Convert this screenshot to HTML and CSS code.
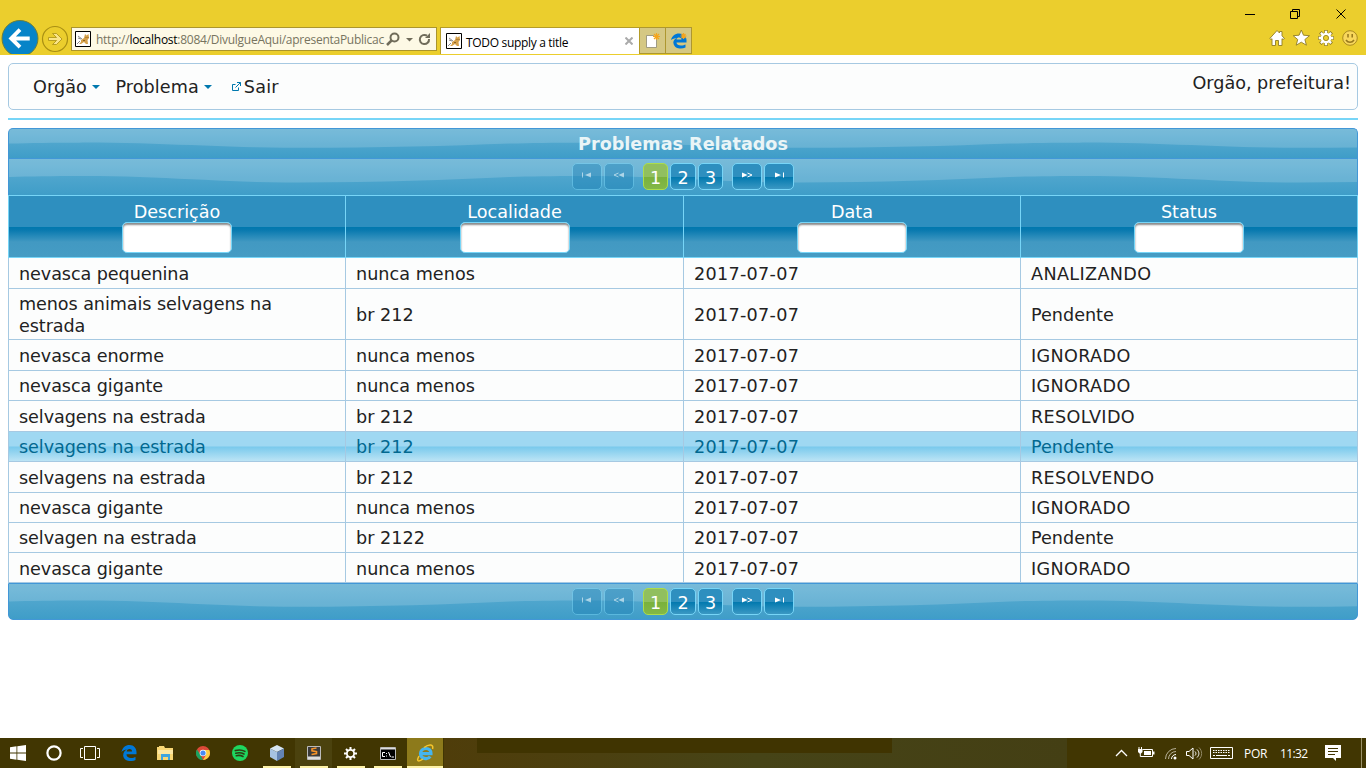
FILE: index.html
```html
<!DOCTYPE html>
<html lang="pt">
<head>
<meta charset="utf-8">
<title>TODO supply a title</title>
<link rel="stylesheet" href="styles.css">
</head>
<body>
<svg class="defs" width="0" height="0">
  <defs>
    <symbol id="cat" viewBox="0 0 16 16"><path fill="#fff" stroke="#000" d="M.5.500h15v15H.5z"/><path fill="#d5a04a" d="M6 9l3-2 1-4 1.500 1.500L13.500 3l.5 4-1.500 2 .5 4h-2l-2-2-3 2H4l2-2z"/><path fill="none" stroke="#8b8b8b" d="M7 8L3 5M6 8L3 7M5 10l-3 3"/><path fill="#8c6427" d="M10.500 6h1v1h-1zM12.500 6h1v1h-1zM8 9h2v1H8z"/></symbol>
    <symbol id="p-first" viewBox="0 0 10 6"><path d="M0 .5h1v5H0zM9 .5v5L3 3z"/></symbol>
    <symbol id="p-prev" viewBox="0 0 12 6"><path d="M11 .5v5L5.500 3z"/><path fill="none" stroke="#fff" d="M5.500 1L1 3l4.500 2"/></symbol>
    <symbol id="p-next" viewBox="0 0 12 6"><path d="M1 .5v5L6.500 3z"/><path fill="none" stroke="#fff" d="M6.500 1L11 3 6.500 5"/></symbol>
    <symbol id="p-last" viewBox="0 0 10 6"><path d="M9 .5h1v5H9zM1 .5v5L7 3z"/></symbol>
  </defs>
</svg>

<header class="browser">
  <div class="window-buttons">
    <svg width="106" height="14" viewBox="0 0 106 14" fill="none" stroke="#000"><path d="M0 7.500h10M45.500 4.500h7v7h-7zM47.500 4V2.500h7v7H53M91.500 2.500l9 9M100.500 2.500l-9 9"/></svg>
  </div>
  <div class="toolbar">
    <svg class="back" width="40" height="35" viewBox="0 0 40 35"><circle cx="20" cy="19" r="18.500" fill="#0784c8" stroke="#6b7d3a" stroke-width="1"/><path fill="none" stroke="#fff" stroke-width="4" d="M30 19H12M20 10l-9 9 9 9"/></svg>
    <svg class="forward" width="28" height="28" viewBox="0 0 28 28"><circle cx="14" cy="14" r="12.500" fill="none" stroke="#a88f13" stroke-width="1.200"/><path fill="#fae588" stroke="#a88f13" stroke-width=".8" d="M7.500 12.500h8L11.500 8.500h4l5.500 5.500-5.500 5.500h-4l4-4h-8z"/></svg>
    <div class="address">
      <svg width="16" height="16"><use href="#cat"/></svg>
      <span class="url">http://<b>localhost</b>:8084/DivulgueAqui/apresentaPublicac</span>
      <svg class="address-tools" width="48" height="18" viewBox="0 0 48 18" fill="none" stroke="#706c5a"><circle cx="8.500" cy="7.500" r="4" stroke-width="2"/><path stroke-width="2.500" d="M5.500 10.500L1 15"/><path fill="#706c5a" stroke="none" d="M20 8h7l-3.500 3.500z"/><path stroke-width="2" d="M43 9a4.600 4.600 0 1 1-2-3.300"/><path fill="#706c5a" stroke="none" d="M39 8h5V3z"/></svg>
    </div>
    <div class="tab">
      <svg width="16" height="16"><use href="#cat"/></svg>
      <span class="tab-title">TODO supply a title</span>
      <svg width="8" height="8" viewBox="0 0 8 8"><path stroke="#aaa" stroke-width="2" d="M.5.5l7 7M7.500.5l-7 7"/></svg>
    </div>
    <div class="tab-button"><svg width="16" height="18" viewBox="0 0 16 18"><path fill="#fff" stroke="#8d8974" stroke-width=".8" d="M1.500 3.500h7l3 3v9h-10z"/><path stroke="#f5a51c" stroke-width="1.200" d="M11.500 1v7M8 4.500h7M9 2l5 5M14 2L9 7"/></svg></div>
    <div class="tab-button"><svg width="16" height="18" viewBox="0 0 16 18"><path fill="#0078d7" d="M0 8C1 4 4 1.500 8 1.500c5 0 7.500 3.500 7.500 6.500v2.500h-10c0 2 2 3 4.500 3 2 0 3.500-.5 4.500-1v3c-4 2-11 1.500-12-4C1.800 9 4 6.500 6 6 3.500 6 1.500 7 0 8zm5.500-.5h5C10.500 5 6 4.800 5.500 7.500z"/><path stroke="#f5a51c" stroke-width="1.200" d="M12.500 1v6M9.500 4h6M10.500 2l4 4M14.500 2l-4 4"/></svg></div>
    <svg class="browser-icons" width="92" height="18" viewBox="0 0 92 18">
      <g fill="#fff" stroke="#907d25" stroke-width=".9"><path d="M.8 9.500L8 1.500l2.500 2.500V2.500h2.500v4.300l2.500 2.700-1.500 1-1-.8v6.800H9.500v-5h-3v5H3V9.700l-1 .8z"/><path d="M32.300 1l2.200 5.200 6 .5-4.600 3.800 1.500 5.700-5.100-3-5.100 3 1.500-5.700-4.500-3.800 5.900-.5z"/></g>
      <path stroke="#907d25" stroke-width="3.600" d="M57 1v16M49 9h16M51.300 3.300l11.400 11.400M62.700 3.300L51.300 14.700"/><path stroke="#fff" stroke-width="2.300" d="M57 1.700v14.600M49.700 9h14.600M51.900 3.900l10.200 10.200M62.100 3.900L51.900 14.100"/><circle cx="57" cy="9" r="4" fill="#ebce2d" stroke="#fff" stroke-width="2.600"/><circle cx="57" cy="9" r="2.600" fill="#ebce2d" stroke="#907d25" stroke-width=".8"/>
      <circle cx="81" cy="9" r="7.300" fill="#f8d75c" stroke="#aa8b20"/><path fill="none" stroke="#97781a" stroke-width="1.500" d="M79 5v3.500M83.200 5v3.500M77 11c2 3 6 3 8 0"/>
    </svg>
  </div>
</header>

<main class="page">
  <nav class="menubar">
    <a class="menu-item">Orgão<i class="caret"></i></a>
    <a class="menu-item second">Problema<i class="caret"></i></a>
    <a class="menu-item exit"><svg width="9" height="9" viewBox="0 0 9 9" fill="none" stroke="#0078ae"><path d="M3.500 2.500h-3v6h6v-3M5 .5h3.500V4M8.500.5l-5 5"/></svg>Sair</a>
    <span class="greeting">Orgão, prefeitura!</span>
  </nav>
  <div class="rule"></div>

  <section class="datatable">
    <div class="caption wave">Problemas Relatados</div>
    <div class="paginator wave">
      <span class="pg icon off"><svg width="10" height="6"><use href="#p-first"/></svg></span>
      <span class="pg icon off"><svg width="12" height="6"><use href="#p-prev"/></svg></span>
      <span class="pg num active">1</span><span class="pg num">2</span><span class="pg num three">3</span>
      <span class="pg icon next"><svg width="12" height="6"><use href="#p-next"/></svg></span>
      <span class="pg icon"><svg width="10" height="6"><use href="#p-last"/></svg></span>
    </div>
    <table class="grid">
      <colgroup><col class="c1"><col class="c2"><col class="c3"><col class="c4"></colgroup>
      <thead><tr>
        <th>Descrição<input type="text"></th><th>Localidade<input type="text"></th><th>Data<input type="text"></th><th>Status<input type="text"></th>
      </tr></thead>
      <tbody>
        <tr class="h31"><td>nevasca pequenina</td><td>nunca menos</td><td>2017-07-07</td><td>ANALIZANDO</td></tr>
        <tr class="h51"><td>menos animais selvagens na<br>estrada</td><td>br 212</td><td>2017-07-07</td><td class="mixed">Pendente</td></tr>
        <tr class="h31"><td>nevasca enorme</td><td>nunca menos</td><td>2017-07-07</td><td>IGNORADO</td></tr>
        <tr class="h30"><td>nevasca gigante</td><td>nunca menos</td><td>2017-07-07</td><td>IGNORADO</td></tr>
        <tr class="h31"><td>selvagens na estrada</td><td>br 212</td><td>2017-07-07</td><td>RESOLVIDO</td></tr>
        <tr class="h30 hover"><td>selvagens na estrada</td><td>br 212</td><td>2017-07-07</td><td class="mixed">Pendente</td></tr>
        <tr class="h31"><td>selvagens na estrada</td><td>br 212</td><td>2017-07-07</td><td>RESOLVENDO</td></tr>
        <tr class="h30"><td>nevasca gigante</td><td>nunca menos</td><td>2017-07-07</td><td>IGNORADO</td></tr>
        <tr class="h30"><td>selvagen na estrada</td><td>br 2122</td><td>2017-07-07</td><td class="mixed">Pendente</td></tr>
        <tr class="h30 end"><td>nevasca gigante</td><td>nunca menos</td><td>2017-07-07</td><td>IGNORADO</td></tr>
      </tbody>
    </table>
    <div class="paginator bottom wave">
      <span class="pg icon off"><svg width="10" height="6"><use href="#p-first"/></svg></span>
      <span class="pg icon off"><svg width="12" height="6"><use href="#p-prev"/></svg></span>
      <span class="pg num active">1</span><span class="pg num">2</span><span class="pg num three">3</span>
      <span class="pg icon next"><svg width="12" height="6"><use href="#p-next"/></svg></span>
      <span class="pg icon"><svg width="10" height="6"><use href="#p-last"/></svg></span>
    </div>
  </section>
</main>

<footer class="taskbar">
  <span class="task sys"><svg width="16" height="16" viewBox="0 0 16 16" fill="#fff"><path d="M0 2.200l6.500-.9v6.200H0zM7.300 1.200L16 0v7.500H7.300zM0 8.500h6.500v6.200L0 13.800zM7.300 8.500H16V16l-8.700-1.200z"/></svg></span>
  <span class="task sys"><svg width="16" height="16" viewBox="0 0 16 16"><circle cx="8" cy="8" r="6.600" fill="none" stroke="#fff" stroke-width="2.200"/></svg></span>
  <span class="task sys last"><svg width="20" height="14" viewBox="0 0 20 14" fill="none" stroke="#fff"><path d="M4.500.5h11v13h-11zM3 2.500H.5v9H3M17 2.500h2.500v9H17"/></svg></span>
  <span class="task"><svg width="16" height="16" viewBox="0 0 16 16"><path fill="#0078d7" d="M.5 7C1.500 2.500 4.500 0 8.500 0c4.500 0 7 3.500 7 7v2.200h-10c0 2.500 2 3.800 4.500 3.800 2 0 3.500-.5 4.500-1v3C10 17 3 16.500 2.200 11 2 7.500 4 5.300 6 4.500 4 4.500 1.500 5.500.5 7zm5.200-.5h5.300C11 3.300 6.200 3.300 5.700 6.500z"/></svg></span>
  <span class="task"><svg width="17" height="15" viewBox="0 0 17 15"><path fill="#f8d775" d="M0 1h2V0h5l1 2h8v12H0z"/><path fill="#fbe7a3" d="M1 4h15v4H1z"/><path fill="#3da4df" d="M4 8h9v6h-2v-3H6v3H4z"/></svg></span>
  <span class="task"><svg width="14" height="14" viewBox="0 0 14 14"><circle cx="7" cy="7" r="7" fill="#dc4938"/><path fill="#1aa260" d="M1 3.400L4.800 9.500 7 14A7 7 0 0 1 1 3.400z"/><path fill="#ffce44" d="M7 4h6.300A7 7 0 0 1 7 14l3-5z"/><circle cx="7" cy="7" r="3.300" fill="#fff"/><circle cx="7" cy="7" r="2.600" fill="#4a8af4"/></svg></span>
  <span class="task"><svg width="16" height="16" viewBox="0 0 16 16"><circle cx="8" cy="8" r="8" fill="#1ed760"/><path fill="none" stroke="#2d3d12" stroke-width="1.600" stroke-linecap="round" d="M3.300 5.600c3.500-1 7-.7 9.600.8M3.800 8.200c3-.8 5.800-.5 8.200.8M4.300 10.700c2.500-.6 4.700-.4 6.700.8"/></svg></span>
  <span class="task open"><svg width="14" height="16" viewBox="0 0 14 16"><path fill="#d5e4f2" d="M0 3.500L7 0l7 3.500L7 7z"/><path fill="#a7c3e2" d="M0 3.500L7 7v9L0 12z"/><path fill="#6484b4" d="M14 3.500L7 7v9l7-4z"/></svg></span>
  <span class="task open tint"><svg width="14" height="14" viewBox="0 0 14 14"><path fill="#3b3b3b" stroke="#bbb" d="M.5.500h13v13H.5z"/><path fill="#ddd" d="M1 10.500h12V13H1z"/><path fill="none" stroke="#f79429" stroke-width="1.600" d="M9.500 2L5 2.800v2l4.500.8v2L4.500 8.500"/></svg></span>
  <span class="task open"><svg width="13" height="13" viewBox="0 0 13 13" fill="none" stroke="#fff"><circle cx="6.500" cy="6.500" r="3.600" stroke-width="1.800"/><path stroke-width="2" d="M6.500 0v3M6.500 10v3M0 6.500h3M10 6.500h3M2 2l2 2M9 9l2 2M11 2L9 4M4 9l-2 2"/></svg></span>
  <span class="task open"><svg width="16" height="13" viewBox="0 0 16 13"><path fill="#000" stroke="#bbb" d="M.5.5h15v12H.5z"/><path fill="#ddd" d="M1 1h14v1.500H1z"/><path fill="none" stroke="#fff" d="M5 5.500H2.500v4H5M6.500 6v1M6.500 8.500v1M8.500 5l2 5M11.500 10H14"/></svg></span>
  <span class="task open current"><svg width="18" height="18" viewBox="0 0 18 18"><path fill="none" stroke="#45b5ee" stroke-width="3.200" d="M4.500 9.700H15C15.200 6.500 13 4.500 10 4.500c-3.500 0-5.500 2.500-5.500 5.200 0 5.300 7.500 6.300 9.700 2.800"/><path fill="none" stroke="#f5c52c" stroke-width="1.500" d="M3 12C-.5 18.500 3.500 17.500 7 15M8 3.500C13 0 18 0 16.500 5"/></svg></span>
  <span class="strip"><i class="strip-dark"></i></span>
  <span class="tray">
    <svg class="tray-icons" width="119" height="18" viewBox="0 0 119 18" fill="none" stroke="#fff">
      <path stroke-width="1.300" d="M1 12l5.500-5.500L12 12"/>
      <path d="M27.500 5.500h10v7h-10"/><path fill="#fff" stroke="none" d="M29 7h7v4h-7zM38 7.500h1.500v3H38zM23 5h4.500v3L26 9.500h-1.500L23 8zM23.500 3h1v2h-1zM26 3h1v2h-1z"/><path d="M25.300 9v3.500H28"/>
      <path stroke="#b8b198" d="M50.500 15A10.500 10.500 0 0 1 61 4.500M53.500 15A7.500 7.500 0 0 1 61 7.500"/><path d="M56.500 15a4.500 4.500 0 0 1 4.500-4.500"/><circle cx="60" cy="14" r="1.500" fill="#fff" stroke="none"/>
      <path d="M71.500 7.500H74l4-3.500v11l-4-3.500h-2.500zM80 7.500c1.200 1.200 1.200 3 0 4M82 5.500c2.500 2.500 2.500 5.500 0 8"/><path stroke="#908764" d="M84 3.500c3.500 3.500 3.500 8.500 0 12"/>
      <path d="M95.500 3.500h22v11h-22z"/><path stroke-dasharray="1.500 1" d="M98 6.500h17M98 8.500h17"/><path d="M98 11.500h2M101 11.500h11M113 11.500h2"/>
    </svg>
    <span class="lang">POR</span><span class="clock">11:32</span>
    <svg class="note" width="16" height="16" viewBox="0 0 16 16"><path fill="#fff" d="M0 0h16v13h-5v3l-3-3H0z"/><path stroke="#403400" d="M3 3.500h10M3 6.500h10M3 9.500h7"/></svg>
    <i class="show-desktop"></i>
  </span>
</footer>
</body>
</html>
```

FILE: styles.css
```css
* { box-sizing: border-box; }
body { margin: 0; width: 1366px; height: 768px; overflow: hidden; display: flex; flex-direction: column; background: #fff; font-family: Verdana, "DejaVu Sans", sans-serif; font-size: 17.6px; color: #222; }
.defs { position: absolute; }
svg { display: block; flex: none; }

/* Browser window frame */
.browser { height: 55px; flex: none; background: #ebce2d; font: 12px "Open Sans", "Noto Sans", sans-serif; }
.window-buttons { height: 20px; padding: 7px 20px 0 0; display: flex; justify-content: flex-end; }
.window-buttons svg { margin-right: -5px; }
.toolbar { height: 35px; display: flex; align-items: flex-start; }
.back { height: 34px; }
.forward { margin: 5px 0 0 1px; }
.address { margin: 7px 0 0 2px; width: 366px; height: 24px; border: 1px solid #ab952d; background: #fdf9e5; display: flex; align-items: center; padding-left: 3px; }
.url { width: 286px; margin-left: 5px; white-space: nowrap; color: #77745f; letter-spacing: -.26px; line-height: 18px; padding-top: 2px; }
.url b { font-weight: 400; color: #000; }
.address-tools { margin-left: 4px; }
.tab { margin: 7px 0 0 3px; width: 200px; height: 27px; border: 1px solid #b49c28; border-bottom: 0; background: #fff; display: flex; align-items: center; padding: 0 6px 0 5px; color: #000; }
.tab-title { flex: 1; margin-left: 4px; white-space: nowrap; letter-spacing: -.32px; padding-top: 2px; }
.tab-button { margin-top: 7px; width: 26px; height: 27px; border: 1px solid #ad9730; border-left: 0; background: #d5c883; display: flex; justify-content: center; padding-top: 4px; }
.browser-icons { margin: 9px 0 0 577px; }

/* Page */
.page { flex: 1; padding: 8px 8px 0; }
.menubar { height: 47px; border: 1px solid #a6c9e2; border-radius: 5px; background: #fcfdfd; display: flex; align-items: center; padding: 0 6px 0 24px; white-space: nowrap; }
.menu-item { display: flex; align-items: center; letter-spacing: .08px; }
.caret { margin: 0 0 0 5px; border: 4px solid transparent; border-top-color: #0078ae; border-bottom: 0; }
.second { margin-left: 15.500px; }
.exit { margin-left: 20px; letter-spacing: .25px; }
.exit svg { margin-right: 3px; }
.greeting { margin: -8px 0 0 auto; }
.rule { margin: 8px 0; height: 2px; background: #77d5f7; }
.datatable { width: 1350px; }
.wave {
  border: 1px solid #4297d7;
  background: url("data:image/svg+xml,%3Csvg xmlns='http://www.w3.org/2000/svg' width='500' height='100' viewBox='0 0 500 100' preserveAspectRatio='none'%3E%3Cpath fill='white' fill-opacity='.16' d='M0 0H500V50C440 58 370 65 290 65C210 65 150 46 70 47C45 47 20 48 0 50Z'/%3E%3C/svg%3E") 0 0 / 500px 100% repeat-x, linear-gradient(#5eaed2, #3f9dc8);
}
.caption { height: 30px; border-bottom: 0; border-radius: 5px 5px 0 0; text-align: center; font-weight: 700; line-height: 30px; color: #eaf5f7; }
.paginator { height: 37px; border-bottom: 0; display: flex; justify-content: center; padding-top: 4px; color: #fff; }
.paginator.bottom { border-bottom: 1px solid #4297d7; border-radius: 0 0 5px 5px; }
.pg { height: 27px; border: 1px solid #77d5f7; border-radius: 5px; background: linear-gradient(#2e8fbf 0 50%, #0078ae 51%, #3b98c3); text-align: center; line-height: 28px; margin-right: 2px; }
.icon { width: 30px; padding-top: 8px; fill: #fff; display: flex; justify-content: center; align-items: flex-start; }
.off { opacity: .45; background: #1f82b6; }
.num { width: 26px; }
.active { width: 25px; border-color: #acdd4a; background: linear-gradient(#91bf5f 0 50%, #79b13c 51%, #83b847); margin-left: 7px; }
.three { width: 25px; }
.next { margin-left: 7px; }
.pg:last-child { margin-right: 0; }
.grid { width: 1350px; table-layout: fixed; border-spacing: 0; border-left: 1px solid #a6c9e2; }
.c1, .c3, .c4 { width: 337px; }
.c2 { width: 338px; }
.grid th { height: 63px; padding: 5px 0 0; border: solid #77d5f7; border-width: 1px 1px 1px 0; background: linear-gradient(#2e8fbf 0 31px, #0078ae 31px, #0879af 34px, #4299c2 46px, #459cc4); color: #fff; font-weight: 400; vertical-align: top; line-height: 22px; }
.grid th:first-child { box-shadow: -1px 0 #77d5f7; }
.grid input { display: block; width: 110px; height: 31px; margin: -1px auto 0; border: 1px solid #77d5f7; border-radius: 5px; background: #fff; box-shadow: inset 0 2px 2px #8a8a8a; padding: 0; }
.grid td { padding: 0 10px; border: solid #a6c9e2; border-width: 0 1px 1px 0; background: #fcfdfd; line-height: 22px; }
.grid td:first-child { letter-spacing: -.08px; }
.grid td:nth-child(2) { letter-spacing: .03px; }
.grid td:nth-child(3) { letter-spacing: .3px; }
.grid td:nth-child(4) { letter-spacing: .35px; }
.grid td.mixed { letter-spacing: 0; }
.h30 { height: 30px; }
.h31 { height: 31px; }
.h51 { height: 51px; }
.h31 td, .h51 td, .end td { padding-top: 2px; }
.grid .h51 td { line-height: 22px; padding-top: 2px; }
.h51 td { height: 51px; }
.grid .h31 td, .grid .end td { padding-top: 2px; }
.grid .hover td { color: #026890; background: linear-gradient(#9fd8f2 0 49%, #79c9ec 51%, #bce4f5); }

/* Taskbar */
.taskbar { height: 30px; flex: none; background: #413602; display: flex; color: #fff; font: 12px "Open Sans", "Noto Sans", sans-serif; }
.task { width: 37px; flex: none; display: flex; justify-content: center; align-items: center; }
.sys { width: 36px; }
.last { margin-right: 2px; }
.open { background: linear-gradient(#fdf2a7, #fdf2a7) 5px 100% / 28px 2px no-repeat; }
.tint { background-color: #4b420e; }
.current { width: 36px; margin-left: 1px; background: linear-gradient(#fdf2a7, #fdf2a7) 0 100% / 36px 2px no-repeat #8d7a1b; }
.strip { width: 623px; flex: none; margin-left: 1px; background: linear-gradient(90deg, #4f3d0a, #4b4010 25%, #464417 50%, #443f14); }
.strip-dark { display: block; width: 415px; height: 15px; margin-left: 33px; background: #403401; }
.tray { flex: 1; display: flex; align-items: center; }
.tray-icons { margin-left: 48px; }
.lang { width: 36px; margin-left: 10px; letter-spacing: -.3px; }
.clock { width: 45px; letter-spacing: -.6px; }
.show-desktop { width: 1px; height: 30px; margin-left: 20px; background: #9a9168; }
```
